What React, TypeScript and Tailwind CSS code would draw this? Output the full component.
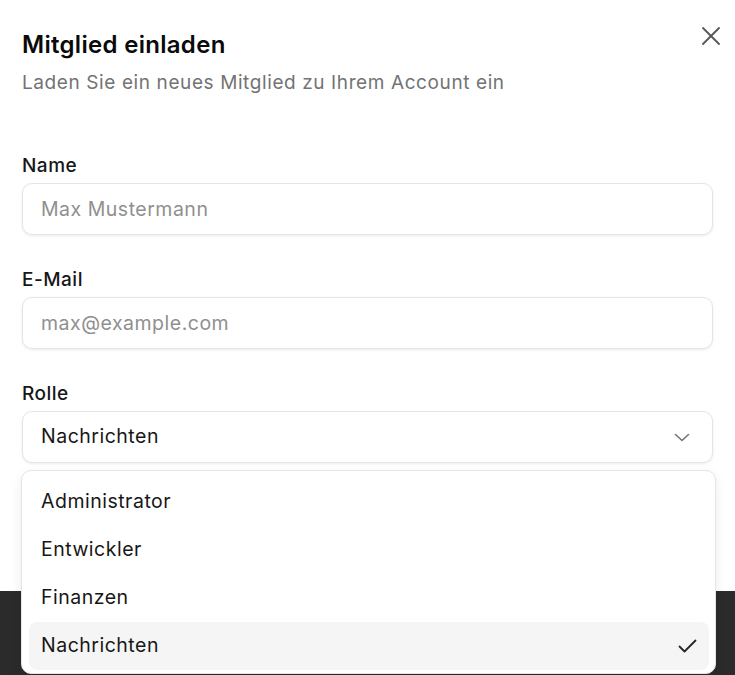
import { useState } from "react";

const font = { fontFamily: "Inter, 'Noto Sans', sans-serif" };

function Field({ label, placeholder }: { label: string; placeholder: string }) {
  return (
    <div className="flex flex-col gap-[5px]">
      <label className="text-[19px] leading-[24px] font-medium tracking-[0.5px] text-[#171717]">{label}</label>
      <input
        placeholder={placeholder}
        className="h-[52px] w-full rounded-[10px] border border-[#e5e5e5] bg-white px-[18px] text-[19.5px] tracking-[0.5px] text-[#171717] shadow-[0_1px_3px_rgba(0,0,0,0.08)] outline-none placeholder:text-[#8f8f8f]"
      />
    </div>
  );
}

const roles = ["Administrator", "Entwickler", "Finanzen", "Nachrichten"];

export default function App() {
  const [role, setRole] = useState("Nachrichten");

  return (
    <div className="flex h-[675px] w-full flex-col overflow-hidden bg-white" style={font}>
      <div className="relative h-[591px] shrink-0 bg-white px-[22px] pt-[31px]">
        <button className="absolute right-[12px] top-[24px] p-[2px] text-[#555555]">
          <svg width="20" height="20" viewBox="0 0 20 20" fill="none" stroke="currentColor" strokeWidth="1.8" strokeLinecap="round">
            <path d="M2 2 18 18" />
            <path d="M18 2 2 18" />
          </svg>
        </button>

        <h2 className="text-[24px] leading-[28px] font-semibold tracking-[0.3px] text-[#0a0a0a]">Mitglied einladen</h2>
        <p className="mt-[12px] text-[19px] leading-[24px] tracking-[0.6px] text-[#737373]">
          Laden Sie ein neues Mitglied zu Ihrem Account ein
        </p>

        <div className="mt-[59px] flex flex-col gap-[33px]">
          <Field label="Name" placeholder="Max Mustermann" />
          <Field label="E-Mail" placeholder="max@example.com" />

          <div className="flex flex-col gap-[5px]">
            <label className="text-[19px] leading-[24px] font-medium tracking-[0.5px] text-[#171717]">Rolle</label>
            <div className="relative">
              <button className="flex h-[52px] w-full items-center justify-between rounded-[10px] border border-[#e5e5e5] bg-white pl-[18px] pr-[22px] text-[19.5px] tracking-[0.5px] text-[#171717] shadow-[0_1px_3px_rgba(0,0,0,0.08)]">
                <span>{role}</span>
                <svg width="16" height="9" viewBox="0 0 16 9" fill="none" stroke="#737373" strokeWidth="1.6" strokeLinecap="round" strokeLinejoin="round">
                  <path d="M1.5 1.5 8 7.5 14.5 1.5" />
                </svg>
              </button>

              <div className="absolute left-[-1px] right-[-3px] top-[59px] z-10 rounded-[10px] border border-[#e5e5e5] bg-white pb-[3px] pl-[7px] pr-[6px] pt-[7px] shadow-[0_4px_12px_rgba(0,0,0,0.08)]">
                {roles.map((r) => (
                  <div
                    key={r}
                    onClick={() => setRole(r)}
                    className={`flex h-[48px] items-center justify-between rounded-[8px] pl-[12px] pr-[12px] text-[19.5px] tracking-[0.5px] text-[#171717] ${r === role ? "bg-[#f5f5f5]" : ""}`}
                  >
                    <span>{r}</span>
                    {r === role && (
                      <svg width="19" height="14" viewBox="0 0 19 14" fill="none" stroke="#262626" strokeWidth="1.8" strokeLinecap="round" strokeLinejoin="round">
                        <path d="M1.5 7.5 6.5 12.5 17.5 1.5" />
                      </svg>
                    )}
                  </div>
                ))}
              </div>
            </div>
          </div>
        </div>
      </div>
      <div className="flex-1 bg-[#2b2b2b]" />
    </div>
  );
}
